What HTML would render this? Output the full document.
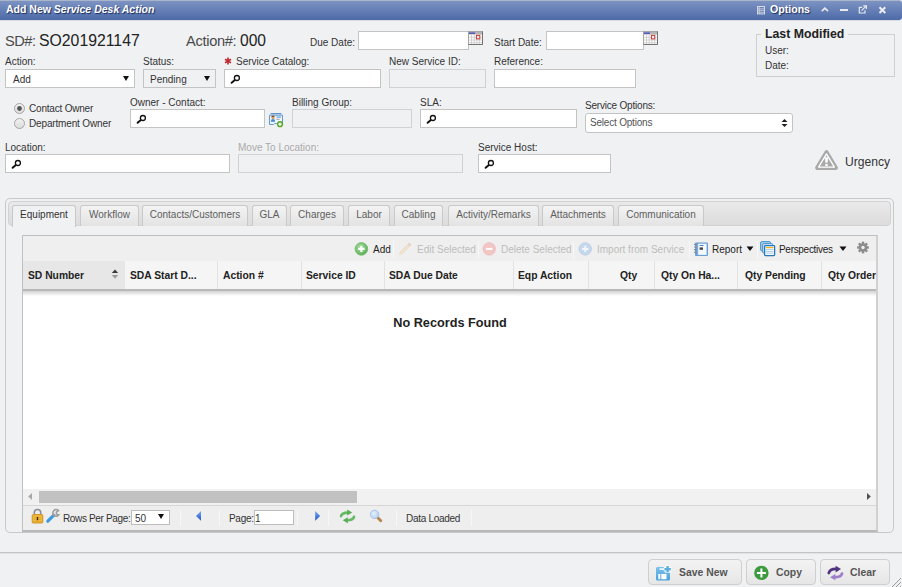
<!DOCTYPE html>
<html><head><meta charset="utf-8">
<style>
*{box-sizing:border-box}
html,body{margin:0;padding:0}
body{width:902px;height:587px;overflow:hidden;background:#f0f1f3;font-family:"Liberation Sans",sans-serif;position:relative;color:#333}
.a{position:absolute}
.t{position:absolute;white-space:nowrap;font-size:10px;line-height:12px;color:#333}
.in{position:absolute;background:#fff;border:1px solid #c4c4c4}
.dis{background:#f0f1f3;border-color:#cfd1d4}
svg{position:absolute;overflow:visible}
.tab{position:absolute;top:205px;height:21px;border:1px solid #c9c9c9;border-bottom:none;border-radius:3px 3px 0 0;background:linear-gradient(#f3f3f3,#e3e3e3);font-size:10px;line-height:12px;padding-top:3px;text-align:center;color:#5e5e5e;white-space:nowrap}
.tab.act{height:22px;background:#f0f1f3;color:#333}
.hd{position:absolute;top:9px;font-size:10.3px;line-height:12px;font-weight:bold;color:#222;white-space:nowrap}
.sep{position:absolute;width:1px;background:#e2e2e2}
.tsep{position:absolute;top:5px;width:1px;height:17px;background:#d6d6d6;border-right:1px solid #f8f8f8}
.tb{position:absolute;top:8px;font-size:10px;line-height:12px;white-space:nowrap;color:#222}
.tb.off{color:#bdbdbd}
.btn{position:absolute;top:559px;height:26px;border:1px solid #cfcfcf;border-radius:4px;background:linear-gradient(#f3f3f3,#e6e6e6)}
.btn span{position:absolute;top:7px;font-size:10.4px;line-height:12px;font-weight:bold;color:#555;white-space:nowrap}

</style></head><body>

<!-- title bar -->
<div class="a" style="left:0;top:20px;width:900px;height:1px;background:#d9dce3"></div>
<div class="a" style="left:0;top:0;width:902px;height:20px;background:linear-gradient(#7c93c2,#4d6aa8);border-top:1px solid #a9b5cb;border-radius:0 3px 3px 0"></div>
<div class="t" style="left:6px;top:3px;font-size:10.5px;font-weight:bold;color:#fff;text-shadow:1px 1px 1px #1c2f5c">Add New <i>Service Desk Action</i></div>

<svg style="left:756px;top:5px" width="10" height="10" viewBox="0 0 10 10"><rect x="1.5" y="1.5" width="7" height="7.4" fill="none" stroke="#d6dbe6" stroke-width="1"/><path d="M1.5 3.8H8.5M1.5 5.6H8.5M1.5 7.3H8.5M3.3 1.5V8.9" stroke="#c6ccda" stroke-width="0.9"/></svg>
<div class="t" style="left:770px;top:3px;font-size:10.6px;font-weight:bold;color:#fff;text-shadow:1px 1px 1px #1c2f5c">Options</div>
<svg style="left:820px;top:6px" width="10" height="7"><path d="M1.8 5.2L4.9 2.1L8 5.2" fill="none" stroke="#e6e9f0" stroke-width="1.7"/></svg>
<div class="a" style="left:840px;top:9px;width:8px;height:2px;background:#e6e9f0"></div>
<svg style="left:858px;top:5px" width="10" height="9" viewBox="0 0 10 9"><path d="M4.2 2.3H1.3V8H7V5.2" fill="none" stroke="#e6e9f0" stroke-width="1.2"/><path d="M3.6 5.6L8 1.2M5.2 0.9H8.4V4" fill="none" stroke="#e6e9f0" stroke-width="1.2"/></svg>
<svg style="left:878px;top:6px" width="9" height="8" viewBox="0 0 9 8"><path d="M1.5 1.2L7.3 7M7.3 1.2L1.5 7" stroke="#eceef3" stroke-width="2"/></svg>

<!-- row1 -->
<div class="t" style="left:5px;top:33px;font-size:14.6px;line-height:17px;color:#4a4a4a;letter-spacing:-0.5px">SD#:</div>
<div class="t" style="left:39px;top:32px;font-size:15.8px;line-height:18px;color:#222">SO201921147</div>
<div class="t" style="left:186px;top:33px;font-size:14.6px;line-height:17px;color:#4a4a4a;letter-spacing:-0.3px">Action#:</div>
<div class="t" style="left:240px;top:32px;font-size:15.6px;line-height:18px;color:#222">000</div>
<div class="t" style="left:310px;top:37px">Due Date:</div>
<div class="in" style="left:358px;top:31px;width:111px;height:19px"></div>
<div class="t" style="left:494px;top:37px">Start Date:</div>
<div class="in" style="left:546px;top:31px;width:98px;height:19px"></div>

<!-- last modified -->
<div class="a" style="left:756px;top:34px;width:139px;height:43px;border:1px solid #cdcfd2"></div>
<div class="t" style="left:761px;top:27px;padding:0 4px;background:#f0f1f3;font-size:12.3px;line-height:14px;font-weight:bold;color:#222">Last Modified</div>
<div class="t" style="left:765px;top:45px">User:</div>
<div class="t" style="left:765px;top:60px">Date:</div>

<!-- row2 -->
<div class="t" style="left:5px;top:56px">Action:</div>
<div class="in" style="left:5px;top:69px;width:130px;height:19px"></div>
<div class="t" style="left:13px;top:74px">Add</div>
<div class="t" style="left:143px;top:56px">Status:</div>
<div class="in" style="left:143px;top:69px;width:73px;height:19px;background:#f0f1f3"></div>
<div class="t" style="left:150px;top:74px">Pending</div>
<div class="t" style="left:236px;top:56px">Service Catalog:</div>
<div class="in" style="left:224px;top:69px;width:157px;height:19px"></div>
<div class="t" style="left:389px;top:56px">New Service ID:</div>
<div class="in dis" style="left:389px;top:69px;width:97px;height:19px"></div>
<div class="t" style="left:494px;top:56px">Reference:</div>
<div class="in" style="left:494px;top:69px;width:142px;height:19px"></div>

<!-- row3 -->
<div class="t" style="left:29px;top:103px;letter-spacing:-0.2px">Contact Owner</div>
<div class="t" style="left:29px;top:118px;letter-spacing:-0.15px">Department Owner</div>
<div class="t" style="left:130px;top:97px">Owner - Contact:</div>
<div class="in" style="left:130px;top:109px;width:135px;height:19px"></div>
<div class="t" style="left:292px;top:97px">Billing Group:</div>
<div class="in dis" style="left:292px;top:109px;width:120px;height:19px"></div>
<div class="t" style="left:420px;top:97px">SLA:</div>
<div class="in" style="left:420px;top:109px;width:157px;height:19px"></div>
<div class="t" style="left:585px;top:100px;letter-spacing:-0.2px">Service Options:</div>
<div class="in" style="left:585px;top:113px;width:208px;height:20px;border-radius:3px"></div>
<div class="t" style="left:590px;top:117px;color:#555;letter-spacing:-0.2px">Select Options</div>

<!-- row4 -->
<div class="t" style="left:5px;top:142px">Location:</div>
<div class="in" style="left:5px;top:154px;width:225px;height:19px"></div>
<div class="t" style="left:238px;top:142px;color:#aaa">Move To Location:</div>
<div class="in dis" style="left:238px;top:154px;width:225px;height:19px"></div>
<div class="t" style="left:478px;top:142px">Service Host:</div>
<div class="in" style="left:478px;top:154px;width:133px;height:19px"></div>
<div class="t" style="left:845px;top:155px;font-size:12.1px;line-height:14px">Urgency</div>

<!-- icons -->
<svg style="left:468px;top:31px" width="15" height="14" viewBox="0 0 15 14"><rect x="0" y="0" width="15" height="14" fill="#fff"/><rect x="0.5" y="0.5" width="14" height="13" fill="none" stroke="#a6a6a6"/><rect x="1" y="1" width="13" height="2.6" fill="#b4b4b4"/><rect x="1" y="1.5" width="6" height="1.3" fill="#4646c6"/><path d="M3.5 3.6V13M6.2 3.6V13M8.9 3.6V13M11.6 3.6V13M1 6.3H14M1 9H14M1 11.7H14" stroke="#cdcdcd" stroke-width="0.9"/><rect x="8.4" y="4.4" width="3.4" height="3.5" fill="#fae8e8" stroke="#c43c3c" stroke-width="1"/><path d="M14.5 0.5V13.5H0.5" fill="none" stroke="#727272"/></svg>
<svg style="left:643px;top:31px" width="15" height="14" viewBox="0 0 15 14"><rect x="0" y="0" width="15" height="14" fill="#fff"/><rect x="0.5" y="0.5" width="14" height="13" fill="none" stroke="#a6a6a6"/><rect x="1" y="1" width="13" height="2.6" fill="#b4b4b4"/><rect x="1" y="1.5" width="6" height="1.3" fill="#4646c6"/><path d="M3.5 3.6V13M6.2 3.6V13M8.9 3.6V13M11.6 3.6V13M1 6.3H14M1 9H14M1 11.7H14" stroke="#cdcdcd" stroke-width="0.9"/><rect x="8.4" y="4.4" width="3.4" height="3.5" fill="#fae8e8" stroke="#c43c3c" stroke-width="1"/><path d="M14.5 0.5V13.5H0.5" fill="none" stroke="#727272"/></svg>
<svg style="left:224px;top:69px" width="14" height="14" viewBox="0 0 14 14"><circle cx="12.9" cy="9" r="2.5" fill="none" stroke="#111" stroke-width="1.3"/><path d="M10.6 11.2 L7.6 13.8" stroke="#111" stroke-width="1.9" stroke-linecap="round"/></svg>
<svg style="left:130px;top:109px" width="14" height="14" viewBox="0 0 14 14"><circle cx="12.9" cy="9" r="2.5" fill="none" stroke="#111" stroke-width="1.3"/><path d="M10.6 11.2 L7.6 13.8" stroke="#111" stroke-width="1.9" stroke-linecap="round"/></svg>
<svg style="left:420px;top:109px" width="14" height="14" viewBox="0 0 14 14"><circle cx="12.9" cy="9" r="2.5" fill="none" stroke="#111" stroke-width="1.3"/><path d="M10.6 11.2 L7.6 13.8" stroke="#111" stroke-width="1.9" stroke-linecap="round"/></svg>
<svg style="left:5px;top:154px" width="14" height="14" viewBox="0 0 14 14"><circle cx="12.9" cy="9" r="2.5" fill="none" stroke="#111" stroke-width="1.3"/><path d="M10.6 11.2 L7.6 13.8" stroke="#111" stroke-width="1.9" stroke-linecap="round"/></svg>
<svg style="left:478px;top:154px" width="14" height="14" viewBox="0 0 14 14"><circle cx="12.9" cy="9" r="2.5" fill="none" stroke="#111" stroke-width="1.3"/><path d="M10.6 11.2 L7.6 13.8" stroke="#111" stroke-width="1.9" stroke-linecap="round"/></svg>
<svg style="left:122px;top:75px" width="8" height="7"><path d="M1 1H7L4 6Z" fill="#111"/></svg>
<svg style="left:203px;top:75px" width="8" height="7"><path d="M1 1H7L4 6Z" fill="#111"/></svg>
<svg style="left:781px;top:118px" width="7" height="10"><path d="M0.5 4L3.5 1L6.5 4Z M0.5 6L3.5 9L6.5 6Z" fill="#222"/></svg>
<svg style="left:224px;top:57px" width="8" height="8" viewBox="0 0 8 8"><path d="M4 0.6V7.4M1 2.3L7 5.7M7 2.3L1 5.7" stroke="#c0282d" stroke-width="1.6"/></svg>
<svg style="left:13px;top:102px" width="13" height="13"><defs><linearGradient id="rg" x1="0" y1="0" x2="0" y2="1"><stop offset="0" stop-color="#f2f2f2"/><stop offset="1" stop-color="#dcdcdc"/></linearGradient></defs><circle cx="6.5" cy="6.5" r="5" fill="url(#rg)" stroke="#a6a6a6"/><circle cx="6.5" cy="6.5" r="2.4" fill="#555"/></svg>
<svg style="left:13px;top:117px" width="13" height="13"><circle cx="6.5" cy="6.5" r="5" fill="url(#rg)" stroke="#a6a6a6"/></svg>
<svg style="left:268px;top:112px" width="16" height="16" viewBox="0 0 16 16"><rect x="2.5" y="1" width="11" height="1.3" rx="0.6" fill="#5c93c9"/><path d="M1.5 3.2H14.5V12.5H9.5L8.5 11.5H6.5L5.5 12.5H1.5Z" fill="#eef5fc" stroke="#5f97d0"/><path d="M3 9.8V8.6Q3 7 5 7Q7 7 7 8.6V9.8Z" fill="#3f86d6"/><circle cx="5" cy="5.6" r="1.6" fill="#dca060"/><path d="M3.3 5.2Q3.4 3.6 5 3.6Q6.6 3.6 6.7 5.2Q5 4.4 3.3 5.2Z" fill="#7a4a1c"/><rect x="8.4" y="4.4" width="4.6" height="1.4" fill="#7fb0e2"/><rect x="8.4" y="6.8" width="3.2" height="0.9" fill="#999"/><circle cx="12" cy="12.2" r="3.1" fill="#58a82a"/><path d="M10.2 12.2H13.8M12 10.4V14" stroke="#fff" stroke-width="1.2"/></svg>
<svg style="left:814px;top:149px" width="27" height="23" viewBox="0 0 27 23"><path d="M12.5 3.2L3.2 18.9H21.8Z" fill="#a9a9a9" stroke="#a9a9a9" stroke-width="4.2" stroke-linejoin="round"/><path d="M12.5 4.9L4.6 18.1H20.4Z" fill="#a9a9a9" stroke="#fff" stroke-width="1.3" stroke-linejoin="round"/><path d="M11 8.6H14L13.3 13.4H11.7Z" fill="#fff" stroke="#fff" stroke-width="0.6" stroke-linejoin="round"/><circle cx="12.5" cy="16" r="1.35" fill="#fff"/></svg>

<!-- tab panel -->
<div class="a" style="left:5px;top:198px;width:889px;height:335px;border:1px solid #c8c8c8;border-radius:5px"></div>
<div class="a" style="left:8px;top:201px;width:883px;height:25px;border:1px solid #d2d2d2;border-radius:4px;background:linear-gradient(#e9e9e9,#dcdcdc)"></div>

<!-- tabs -->
<div class="tab act" style="left:12px;width:64px">Equipment</div>
<div class="tab" style="left:80px;width:59px">Workflow</div>
<div class="tab" style="left:142px;width:106px">Contacts/Customers</div>
<div class="tab" style="left:252px;width:35px">GLA</div>
<div class="tab" style="left:290px;width:54px">Charges</div>
<div class="tab" style="left:348px;width:42px">Labor</div>
<div class="tab" style="left:394px;width:49px">Cabling</div>
<div class="tab" style="left:448px;width:91px">Activity/Remarks</div>
<div class="tab" style="left:542px;width:72px">Attachments</div>
<div class="tab" style="left:618px;width:86px">Communication</div>

<!-- grid -->
<div class="a" style="left:22px;top:235px;width:856px;height:297px;border:1px solid #c0c0c0;border-right:2px solid #d0d0d0;border-bottom:2px solid #b9b9b9;background:#fff;overflow:hidden">
 <!-- toolbar -->
 <div class="a" style="left:0;top:0;width:854px;height:25px;background:#efefef"></div>
 <div class="tb" style="left:350px">Add</div>
 <div class="tsep" style="left:370px"></div>
 <div class="tb off" style="left:394px">Edit Selected</div>
 <div class="tsep" style="left:455px"></div>
 <div class="tb off" style="left:478px">Delete Selected</div>
 <div class="tsep" style="left:550px"></div>
 <div class="tb off" style="left:574px">Import from Service</div>
 <div class="tsep" style="left:666px"></div>
 <div class="tb" style="left:689px">Report</div>
 <div class="tsep" style="left:734px"></div>
 <div class="tb" style="left:756px;letter-spacing:-0.3px">Perspectives</div>
 <!-- header -->
 <div class="a" style="left:0;top:25px;width:854px;height:30px;background:#f5f5f5;border-bottom:2px solid #b8b8b8">
  <div class="a" style="left:0;top:0;width:102px;height:28px;background:#e7e7e7"></div>
  <div class="hd" style="left:5px">SD Number</div>
  <div class="hd" style="left:107px">SDA Start D...</div>
  <div class="hd" style="left:200px">Action #</div>
  <div class="hd" style="left:283px">Service ID</div>
  <div class="hd" style="left:366px">SDA Due Date</div>
  <div class="hd" style="left:495px">Eqp Action</div>
  <div class="hd" style="left:597px">Qty</div>
  <div class="hd" style="left:638px">Qty On Ha...</div>
  <div class="hd" style="left:722px">Qty Pending</div>
  <div class="hd" style="left:805px">Qty Order</div>
  <div class="sep" style="left:194px;top:0;height:28px"></div>
  <div class="sep" style="left:278px;top:0;height:28px"></div>
  <div class="sep" style="left:361px;top:0;height:28px"></div>
  <div class="sep" style="left:490px;top:0;height:28px"></div>
  <div class="sep" style="left:565px;top:0;height:28px"></div>
  <div class="sep" style="left:631px;top:0;height:28px"></div>
  <div class="sep" style="left:714px;top:0;height:28px"></div>
  <div class="sep" style="left:798px;top:0;height:28px"></div>
 </div>
 <div class="a" style="left:0;top:55px;width:854px;height:5px;background:linear-gradient(#d2d2d2,#fff)"></div>
 <div class="t" style="left:0;top:80px;width:854px;text-align:center;font-size:12.7px;line-height:14px;font-weight:bold;color:#222">No Records Found</div>
 <!-- scrollbar -->
 <div class="a" style="left:0;top:253px;width:854px;height:16px;background:#f1f1f1"></div>
 <div class="a" style="left:16px;top:255px;width:318px;height:12px;background:#c1c1c1"></div>
 <!-- pager -->
 <div class="a" style="left:0;top:269px;width:854px;height:26px;background:#eeeeee;border-top:1px solid #d6d6d6"></div>
 <div class="t" style="left:40px;top:277px;letter-spacing:-0.35px">Rows Per Page:</div>
 <div class="in" style="left:108px;top:274px;width:39px;height:15px;border-color:#bdbdbd"></div>
 <div class="t" style="left:112px;top:277px">50</div>
 <div class="tsep" style="left:157px;top:274px;height:16px"></div>
 <div class="tsep" style="left:196px;top:274px;height:16px"></div>
 <div class="t" style="left:206px;top:277px;letter-spacing:-0.3px">Page:</div>
 <div class="in" style="left:231px;top:274px;width:40px;height:15px;border-color:#bdbdbd"></div>
 <div class="t" style="left:232px;top:277px">1</div>
 <div class="tsep" style="left:274px;top:274px;height:16px"></div>
 <div class="tsep" style="left:305px;top:274px;height:16px"></div>
 <div class="tsep" style="left:373px;top:274px;height:16px"></div>
 <div class="t" style="left:383px;top:277px;letter-spacing:-0.3px">Data Loaded</div>
 <div class="tsep" style="left:448px;top:274px;height:16px"></div>
</div>


<svg style="left:354px;top:242px" width="15" height="15" viewBox="0 0 15 15"><defs><radialGradient id="gg" cx="0.4" cy="0.35" r="0.7"><stop offset="0" stop-color="#a6dca2"/><stop offset="1" stop-color="#5cae58"/></radialGradient></defs><circle cx="7.4" cy="6.9" r="6.3" fill="url(#gg)" stroke="#6cb968" stroke-width="0.8"/><path d="M4.2 6.9H10.6M7.4 3.7V10.1" stroke="#fff" stroke-width="2.2"/></svg>
<svg style="left:397px;top:241px" width="16" height="16" viewBox="0 0 16 16"><path d="M2.5 13.5L3.2 10.8L11.6 2.4Q12.6 1.6 13.6 2.4Q14.4 3.4 13.6 4.4L5.2 12.8Z" fill="#f2e2c8" stroke="#e6dcd0" stroke-width="0.8"/><path d="M11.2 2.8L13.2 4.8" stroke="#e8c6d6" stroke-width="1.6"/></svg>
<svg style="left:482px;top:242px" width="15" height="15" viewBox="0 0 15 15"><circle cx="7.2" cy="6.9" r="6.2" fill="#f3c6c6" stroke="#eeb8b8" stroke-width="0.8"/><path d="M4 6.9H10.4" stroke="#fff" stroke-width="2"/></svg>
<svg style="left:578px;top:242px" width="15" height="15" viewBox="0 0 15 15"><circle cx="7.2" cy="6.9" r="6.2" fill="#c6d8ee" stroke="#b8cce6" stroke-width="0.8"/><path d="M4 6.9H10.4M7.2 3.7V10.1" stroke="#f2f6fb" stroke-width="2"/></svg>
<svg style="left:694px;top:242px" width="15" height="15" viewBox="0 0 15 15"><rect x="1" y="0.5" width="13" height="13.5" rx="1" fill="#6b9ed4"/><rect x="3.8" y="1.6" width="9" height="11.4" fill="#cfe2f6"/><rect x="4.6" y="2.2" width="7.4" height="10.2" fill="#f4f9fe"/><rect x="5.6" y="3" width="4" height="1" fill="#4f86c6"/><rect x="5.6" y="5.4" width="3.4" height="2.4" fill="#444"/><path d="M0 2.4H2.6M0 5H2.6M0 7.6H2.6M0 10.2H2.6" stroke="#8a8a8a" stroke-width="1.1"/></svg>
<svg style="left:746px;top:246px" width="9" height="6"><path d="M0.5 0.5H7.5L4 5Z" fill="#111"/></svg>
<svg style="left:760px;top:241px" width="16" height="15" viewBox="0 0 16 15"><rect x="0.6" y="0.6" width="10" height="9.4" rx="1.3" fill="#a6cbea" stroke="#4a93cf"/><rect x="2.6" y="2.6" width="10" height="9.4" rx="1" fill="#cfe3f4" stroke="#4a93cf"/><rect x="4.6" y="4.6" width="10" height="10" rx="0.8" fill="#fff" stroke="#2279bd" stroke-width="1.3"/><rect x="5.8" y="6" width="7.6" height="1.2" fill="#f0b020"/><path d="M5.8 8.6H13.4M5.8 10.4H13.4M5.8 12.1H13.4" stroke="#a2c4e6" stroke-width="0.9"/></svg>
<svg style="left:839px;top:246px" width="9" height="6"><path d="M0.5 0.5H7.5L4 5Z" fill="#111"/></svg>
<svg style="left:856px;top:241px" width="14" height="14" viewBox="0 0 14 14"><g transform="translate(7,6.5)" fill="#8c8c8c"><circle r="4.2"/><rect x="-1.2" y="-5.9" width="2.4" height="11.8"/><rect x="-1.2" y="-5.9" width="2.4" height="11.8" transform="rotate(45)"/><rect x="-1.2" y="-5.9" width="2.4" height="11.8" transform="rotate(90)"/><rect x="-1.2" y="-5.9" width="2.4" height="11.8" transform="rotate(135)"/></g><circle cx="7" cy="6.5" r="1.7" fill="#ededed"/></svg>
<svg style="left:111px;top:268px" width="9" height="12"><path d="M0.8 5L4 1.5L7.2 5Z" fill="#3a3a3a"/><path d="M0.8 6.9L4 10.8L7.2 6.9Z" fill="#9a9a9a"/></svg>
<svg style="left:27px;top:492px" width="6" height="9"><path d="M5 1V8L1.2 4.5Z" fill="#a8a8a8"/></svg>
<svg style="left:866px;top:492px" width="6" height="9"><path d="M1 1V8L4.8 4.5Z" fill="#505050"/></svg>
<svg style="left:31px;top:508px" width="13" height="16" viewBox="0 0 13 16"><path d="M3.3 6.8V4.6Q3.3 1.5 6.5 1.5Q9.7 1.5 9.7 4.6V6.8" fill="none" stroke="#8a8e98" stroke-width="1.6"/><rect x="1.2" y="6.6" width="10.6" height="8.4" rx="1" fill="#f0bc3c" stroke="#c98a1c" stroke-width="0.9"/><path d="M2.5 9.2H10.5M2.5 11.4H10.5M2.5 13.4H10.5" stroke="#d89a26" stroke-width="0.6"/><rect x="5.8" y="9" width="1.4" height="3.2" fill="#3a2a10"/></svg>
<svg style="left:45px;top:508px" width="16" height="16" viewBox="0 0 16 16"><path d="M2.8 13.2L8.6 7.4" stroke="#3c9ae0" stroke-width="3.2" stroke-linecap="round"/><path d="M8.2 7.8L10 6" stroke="#a8a8a8" stroke-width="2.4"/><path d="M13.5 2.6A3.3 3.3 0 1 0 13.8 6.8L12 6.4L11.2 4.2Z" fill="none" stroke="#9a9a9a" stroke-width="1.5"/></svg>
<svg style="left:195px;top:510px" width="8" height="12"><defs><linearGradient id="ba" x1="0" y1="0" x2="0" y2="1"><stop offset="0" stop-color="#7aa8f0"/><stop offset="1" stop-color="#1a56c8"/></linearGradient></defs><path d="M6 1V10.8L1 6Z" fill="url(#ba)"/></svg>
<svg style="left:314px;top:510px" width="8" height="12"><path d="M1.2 1V10.8L6.2 6Z" fill="url(#ba)"/></svg>
<svg style="left:339px;top:509px" width="17" height="15" viewBox="0 0 17 15"><path d="M2 7.2Q3 3.6 8.6 3.6" fill="none" stroke="#66b862" stroke-width="2.6" stroke-linecap="round"/><path d="M8.2 0.6L13.2 3.6L8.2 6.6Z" fill="#5aae56"/><g stroke="#ececec"><path d="M15 7.8Q14 11.2 8.4 11.2" fill="none" stroke-width="4.4" stroke-linecap="round"/><path d="M8.8 8.2L3.8 11.2L8.8 14.2Z" fill="#ececec" stroke-width="1.2"/></g><path d="M15 7.8Q14 11.2 8.4 11.2" fill="none" stroke="#66b862" stroke-width="2.6" stroke-linecap="round"/><path d="M8.8 8.2L3.8 11.2L8.8 14.2Z" fill="#5aae56"/></svg>
<svg style="left:369px;top:509px" width="15" height="15" viewBox="0 0 15 15"><path d="M8.8 8.8L11.8 11.8" stroke="#b8844a" stroke-width="2.8" stroke-linecap="round"/><defs><radialGradient id="lg" cx="0.4" cy="0.4" r="0.6"><stop offset="0" stop-color="#e6f0fb"/><stop offset="1" stop-color="#b6d2f0"/></radialGradient></defs><circle cx="5.6" cy="5.4" r="4.2" fill="url(#lg)" stroke="#9fc0e8" stroke-width="0.9"/></svg>
<svg style="left:157px;top:513px" width="8" height="7"><path d="M1 1H7L4 6Z" fill="#111"/></svg>

<!-- footer -->
<div class="a" style="left:0;top:552px;width:902px;height:2px;background:linear-gradient(#c4c4c4 50%,#e2e3e5 50%)"></div>

<div class="btn" style="left:648px;width:94px"><span style="left:30px">Save New</span></div>
<div class="btn" style="left:746px;width:70px"><span style="left:29px">Copy</span></div>
<div class="btn" style="left:820px;width:70px"><span style="left:29px">Clear</span></div>
<svg style="left:655px;top:565px" width="17" height="17" viewBox="0 0 17 17"><defs><linearGradient id="fl" x1="0" y1="0" x2="0" y2="1"><stop offset="0" stop-color="#7cc0ea"/><stop offset="1" stop-color="#4aa2dc"/></linearGradient></defs><rect x="1" y="2" width="14" height="13.5" rx="1.5" fill="url(#fl)"/><rect x="4.5" y="3.2" width="5" height="1.8" fill="#fff" opacity="0.85"/><rect x="3.3" y="9" width="2" height="5.2" fill="#fff"/><rect x="6.3" y="9" width="5.2" height="5.2" fill="#fff"/><path d="M12.6 0.4V8M8.8 4.2H16.4" stroke="#fff" stroke-width="4.4"/><path d="M12.6 1V7.4M9.4 4.2H15.8" stroke="#5aaee0" stroke-width="2.4"/></svg>
<svg style="left:753px;top:565px" width="16" height="16" viewBox="0 0 16 16"><circle cx="8.4" cy="7.9" r="7.2" fill="#3d9a3d"/><path d="M3.9 7.9H12.9M8.4 3.4V12.4" stroke="#fff" stroke-width="2"/></svg>
<svg style="left:827px;top:565px" width="17" height="16" viewBox="0 0 17 16"><path d="M1.8 8Q2.8 3.8 9 3.8" fill="none" stroke="#4f3380" stroke-width="2.8" stroke-linecap="round"/><path d="M8.6 0.8L14 4.1L8.6 7.4Z" fill="#4f3380"/><g stroke="#eaeaea" stroke-width="1.2"><path d="M15 8.6Q14 12.2 8 12.2" fill="none" stroke-width="4.6" stroke-linecap="round"/><path d="M8.4 9.1L3 12.2L8.4 15.3Z" fill="#eaeaea"/></g><path d="M15 8.6Q14 12.2 8 12.2" fill="none" stroke="#9f7fcc" stroke-width="2.8" stroke-linecap="round"/><path d="M8.4 9.1L3 12.2L8.4 15.3Z" fill="#9f7fcc"/></svg>
<svg style="left:886px;top:573px" width="16" height="14"><path d="M15 5L6 14M15 9L10 14M15 13L14 14" stroke="#9a9a9a" stroke-width="1"/></svg>
</body></html>
